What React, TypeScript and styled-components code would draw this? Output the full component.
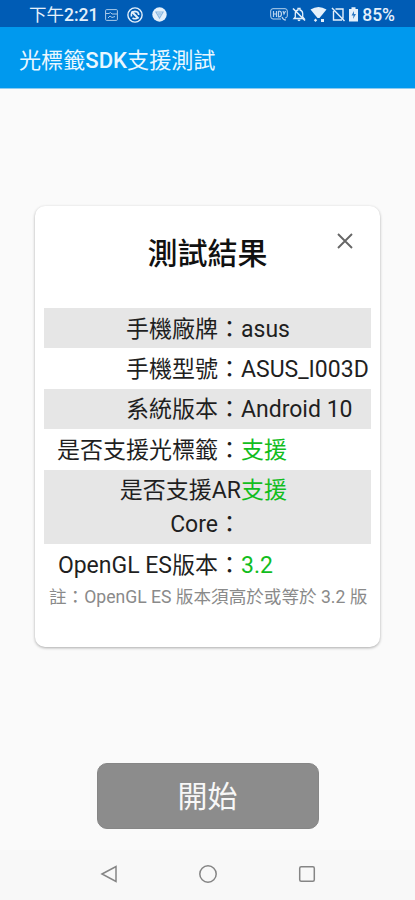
import React from "react";
import styled, { createGlobalStyle } from "styled-components";

const GlobalStyle = createGlobalStyle`
  * { box-sizing: border-box; }
  body { margin: 0; background: #fafafa; font-family: Roboto, "Noto Sans CJK TC", sans-serif; }
`;

const Screen = styled.div`
  width: 415px;
  height: 900px;
  display: flex;
  flex-direction: column;
  background: #fafafa;
  overflow: hidden;
`;

const StatusBar = styled.header`
  height: 27px;
  flex: none;
  display: flex;
  justify-content: space-between;
  align-items: center;
  padding: 2px 20px 0 29px;
  background: #005cb5;
  color: #e4f0fb;
`;

const StatusText = styled.span`
  font-size: 17.5px;
  line-height: 24px;
  font-weight: 400;
  white-space: nowrap;
`;

const Strong = styled.span`
  font-weight: 500;
`;

const Icons = styled.div<{ $gap: number }>`
  display: flex;
  align-items: center;
  gap: ${(p) => p.$gap}px;
`;

const StatusGroup = styled.div<{ $gap: number }>`
  display: flex;
  align-items: center;
  gap: ${(p) => p.$gap}px;
`;

const AppBar = styled.div`
  height: 62px;
  flex: none;
  display: flex;
  align-items: center;
  padding: 4px 19px 0;
  background: #0099ee;
  color: #eaf7ff;
  border-bottom: 1px solid #8ccbf0;
`;

const AppTitle = styled.h1`
  margin: 0;
  font-size: 22.1px;
  line-height: 32px;
  font-weight: 400;
  white-space: nowrap;
`;

const Content = styled.main`
  flex: 1;
  display: flex;
  flex-direction: column;
  align-items: center;
  padding-top: 117px;
`;

const Card = styled.section`
  width: 345px;
  height: 441px;
  padding: 0 9px;
  border-radius: 10px;
  background: #fff;
  box-shadow: 0 1px 3px rgba(0, 0, 0, 0.32);
`;

const CardHeader = styled.div`
  height: 102px;
  display: grid;
  grid-template-columns: 54px 1fr 54px;
  justify-items: center;
  padding-top: 27px;
`;

const CardTitle = styled.h2`
  grid-column: 2;
  margin: 0;
  font-size: 30px;
  line-height: 42px;
  font-weight: 500;
  color: #111;
`;

const CloseButton = styled.button`
  width: 24px;
  height: 24px;
  margin: -4px 0 0 2px;
  padding: 0;
  border: 0;
  background: none;
  color: #666;
  display: grid;
  place-items: center;
`;

const Results = styled.dl`
  margin: 0;
`;

const Row = styled.div<{ $shaded: boolean }>`
  display: grid;
  grid-template-columns: 197px 1fr;
  padding: 4.7px 0 1.7px;
  font-size: 23px;
  line-height: 34px;
  background: ${(p) => (p.$shaded ? "#e6e6e6" : "transparent")};
  color: #1f1f1f;
`;

const Label = styled.dt`
  text-align: right;
`;

const Value = styled.dd<{ $ok?: boolean }>`
  margin: 0;
  white-space: nowrap;
  color: ${(p) => (p.$ok ? "#12bd1d" : "inherit")};
`;

const Note = styled.p`
  margin: 0;
  padding: 1px 0 0 5px;
  font-size: 17.6px;
  line-height: 24px;
  color: #8a8a8a;
  white-space: nowrap;
`;

const StartButton = styled.button`
  width: 222px;
  height: 66px;
  margin-top: 116px;
  padding: 2px 0 0;
  border: 1px solid #868686;
  border-radius: 10px;
  background: #8c8c8c;
  color: #f7f7f7;
  font: 400 30px/44px Roboto, "Noto Sans CJK TC", sans-serif;
`;

const NavBar = styled.nav`
  height: 50px;
  flex: none;
  display: grid;
  grid-template-columns: repeat(3, 99px);
  justify-content: center;
  justify-items: center;
  align-items: center;
  padding-bottom: 2px;
  background: #f8f8f8;
`;

const rows = [
  { label: "手機廠牌：", value: "asus" },
  { label: "手機型號：", value: "ASUS_I003D" },
  { label: "系統版本：", value: "Android 10" },
  { label: "是否支援光標籤：", value: "支援", ok: true },
  { label: "是否支援AR Core：", value: "支援", ok: true },
  { label: "OpenGL ES版本：", value: "3.2", ok: true },
];

const PictureIcon = () => (
  <svg width="13" height="12" viewBox="0 0 13 12" fill="none" stroke="currentColor" opacity=".75">
    <rect x=".6" y=".6" width="11.8" height="10.8" rx="1" />
    <path d="M1 4.500h3L5.500 3.500 7 5h5M3 9l2-2 2 1.500L10 7.500" />
  </svg>
);

const SyncOffIcon = () => (
  <svg width="16" height="16" viewBox="0 0 16 16" fill="none" stroke="currentColor" strokeWidth="1.400">
    <circle cx="8" cy="8" r="7.100" />
    <path d="M4.500 9.500C3.500 6.500 5.500 4.300 8 4.300q3.700.2 3.700 3.700M5.500 11q2.500 1.500 4.500 0" strokeWidth="1.700" />
    <path d="M4.500 4.500l7 7" strokeWidth="2" />
  </svg>
);

const BrowserIcon = () => (
  <svg width="15" height="15" viewBox="0 0 15 15">
    <circle cx="7.500" cy="7.500" r="7.200" fill="currentColor" />
    <path d="M4 5h7L7.500 11Z" fill="none" stroke="#8ab7e0" strokeWidth="1.200" />
    <circle cx="7.500" cy="7" r="1.700" fill="#a9cbea" />
  </svg>
);

const HdVoiceIcon = () => (
  <svg width="18" height="13" viewBox="0 0 18 13" fill="none" stroke="currentColor" opacity=".8">
    <path d="M3 .7h12Q17.300.7 17.300 3v5Q17.300 10 15 10M11 11H3Q.7 11 .7 8V3Q.7.700 3 .7" />
    <path d="M3.500 3v6M6.500 3v6M3.500 6h3M8.500 3v6q3 0 3-3t-3-3M13 3l1 3 1.500-3M12 9q1 3 4 3" strokeWidth="1.200" />
  </svg>
);

const BellOffIcon = () => (
  <svg width="14" height="15" viewBox="0 0 14 15">
    <path d="M2 11.500h10L10.700 10V6.500Q10.500 3.600 8 3V1.500H6V3Q3.300 3.600 3.300 6.500V10Z" fill="none" stroke="currentColor" strokeWidth="1.300" />
    <path d="M5.500 12.500h3q0 1.800-1.500 1.800t-1.500-1.800" fill="currentColor" />
    <path d="M1 1.500l12 12" stroke="currentColor" strokeWidth="1.600" />
  </svg>
);

const WifiIcon = () => (
  <svg width="17" height="17" viewBox="0 0 17 17" fill="currentColor">
    <path d="M.5 3.500Q8.500-1.500 16.500 3.500L9.500 12h-2Z" />
    <path d="M5.500 12.500l1.700 1.700-1.700 1.700-1.700-1.700zM11 13h3v3h-3z" />
  </svg>
);

const SimOffIcon = () => (
  <svg width="14" height="15" viewBox="0 0 14 15" fill="none" stroke="currentColor" strokeWidth="1.400">
    <path d="M4.500 2H12v9.500M2.500 4v9H11M1 1l12.500 13" />
  </svg>
);

const BatteryIcon = () => (
  <svg width="9" height="15" viewBox="0 0 9 15">
    <path d="M0 2h2.500V.3h4V2H9v12.500H0Z" fill="currentColor" />
    <path d="M5 4 2.500 8.500h2L4 12l3-5H5Z" fill="#2c78c3" />
  </svg>
);

export default function App() {
  return (
    <Screen>
      <GlobalStyle />
      <StatusBar>
        <StatusGroup $gap={7}>
          <StatusText>
            下午<Strong>2:21</Strong>
          </StatusText>
          <Icons $gap={9}>
            <PictureIcon />
            <SyncOffIcon />
            <BrowserIcon />
          </Icons>
        </StatusGroup>
        <StatusGroup $gap={4}>
          <Icons $gap={4}>
            <HdVoiceIcon />
            <BellOffIcon />
            <WifiIcon />
            <SimOffIcon />
            <BatteryIcon />
          </Icons>
          <StatusText>
            <Strong>85%</Strong>
          </StatusText>
        </StatusGroup>
      </StatusBar>
      <AppBar>
        <AppTitle>
          光標籤<Strong>SDK</Strong>支援測試
        </AppTitle>
      </AppBar>
      <Content>
        <Card>
          <CardHeader>
            <CardTitle>測試結果</CardTitle>
            <CloseButton aria-label="關閉">
              <svg width="16" height="16" viewBox="0 0 16 16" stroke="currentColor" strokeWidth="1.900">
                <path d="M1 1l14 14M15 1 1 15" />
              </svg>
            </CloseButton>
          </CardHeader>
          <Results>
            {rows.map((row, i) => (
              <Row key={row.label} $shaded={i % 2 === 0 && i < 5}>
                <Label>{row.label}</Label>
                <Value $ok={row.ok}>{row.value}</Value>
              </Row>
            ))}
          </Results>
          <Note>註：OpenGL ES 版本須高於或等於 3.2 版</Note>
        </Card>
        <StartButton>開始</StartButton>
      </Content>
      <NavBar>
        <svg width="18" height="18" viewBox="0 0 18 18" fill="none" stroke="#858585" strokeWidth="1.500">
          <path d="M2 9 16 1.500v15Z" />
        </svg>
        <svg width="20" height="20" viewBox="0 0 20 20" fill="none" stroke="#858585" strokeWidth="1.500">
          <circle cx="10" cy="10" r="8.200" />
        </svg>
        <svg width="18" height="18" viewBox="0 0 18 18" fill="none" stroke="#858585" strokeWidth="1.500">
          <rect x="1.700" y="1.700" width="14.600" height="14.600" rx="1.500" />
        </svg>
      </NavBar>
    </Screen>
  );
}
